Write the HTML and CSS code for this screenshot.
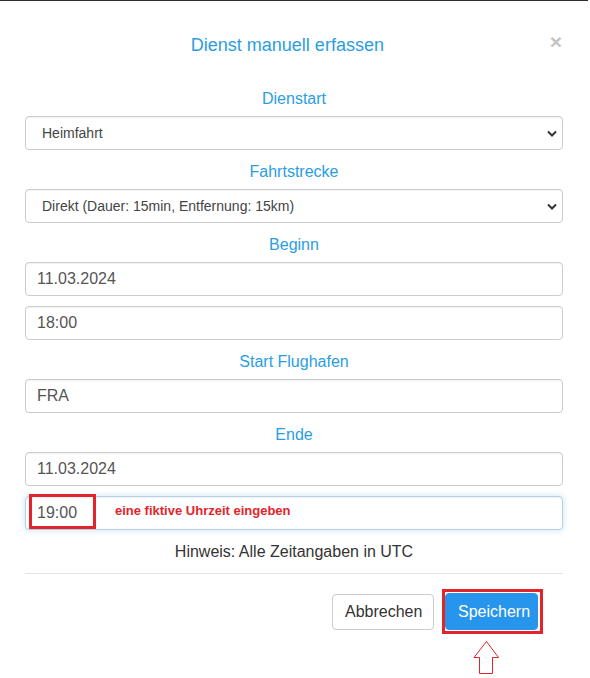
FILE: index.html
```html
<!DOCTYPE html>
<html lang="de">
<head>
<meta charset="utf-8">
<title>Dienst manuell erfassen</title>
<link rel="stylesheet" href="styles.css">
</head>
<body>
<div class="topline"></div>
<div class="modal">
  <div class="modal-header">
    <h4 class="modal-title">Dienst manuell erfassen</h4>
    <button class="close" type="button">×</button>
  </div>
  <form class="modal-body">
    <div class="group">
      <label class="lbl">Dienstart</label>
      <div class="select-wrap">
        <select class="control select"><option>Heimfahrt</option></select>
        <svg class="chev" width="10" height="7" viewBox="0 0 10 7"><polyline points="1,1.5 5,5.5 9,1.5" fill="none" stroke="#333" stroke-width="2"/></svg>
      </div>
    </div>
    <div class="group">
      <label class="lbl">Fahrtstrecke</label>
      <div class="select-wrap">
        <select class="control select"><option>Direkt (Dauer: 15min, Entfernung: 15km)</option></select>
        <svg class="chev" width="10" height="7" viewBox="0 0 10 7"><polyline points="1,1.5 5,5.5 9,1.5" fill="none" stroke="#333" stroke-width="2"/></svg>
      </div>
    </div>
    <div class="group">
      <label class="lbl">Beginn</label>
      <input class="control" type="text" value="11.03.2024">
      <input class="control next" type="text" value="18:00">
    </div>
    <div class="group">
      <label class="lbl">Start Flughafen</label>
      <input class="control" type="text" value="FRA">
    </div>
    <div class="group">
      <label class="lbl">Ende</label>
      <input class="control" type="text" value="11.03.2024">
      <div class="annot-wrap next">
        <input class="control focus" type="text" value="19:00">
        <div class="redbox time-box"></div>
        <div class="annot-text">eine fiktive Uhrzeit eingeben</div>
      </div>
    </div>
    <p class="hint">Hinweis: Alle Zeitangaben in UTC</p>
  </form>
  <div class="modal-footer">
    <button class="btn btn-default" type="button">Abbrechen</button>
    <div class="annot-wrap">
      <button class="btn btn-primary" type="button">Speichern</button>
      <div class="redbox save-box"></div>
      <svg class="arrow" width="27" height="34" viewBox="0 0 27 34"><polygon points="13.5,0.5 1,16.5 6.5,16.5 6.5,32.5 19.5,32.5 19.5,16.5 25.5,16.5" fill="#fff" stroke="#e3242b" stroke-width="1"/></svg>
    </div>
  </div>
</div>
</body>
</html>
```

FILE: styles.css
```css
html {
  overflow: hidden;
  height: 100%;
}
html, body {
  margin: 0;
  padding: 0;
  background: #fff;
}
body {
  min-height: 100%;
  font-family: "Liberation Sans", Arial, sans-serif;
  color: #333;
}
.topline {
  height: 1px;
  background: #2b2e30;
  margin-right: 2px;
}
.modal {
  padding: 0 27px 0 25px;
}
.modal-header {
  display: flex;
  align-items: flex-start;
  padding-top: 34px;
}
.modal-title {
  flex: 1;
  margin: 0;
  font-size: 18px;
  line-height: 20px;
  font-weight: normal;
  color: #2b9de3;
  text-align: center;
}
.close {
  border: 0;
  background: none;
  padding: 0;
  margin: -3px 1px 0 0;
  font-family: "Liberation Sans", Arial, sans-serif;
  font-size: 21px;
  font-weight: bold;
  line-height: 20px;
  color: #c4c4c4;
}
.modal-body {
  display: block;
  margin: 0;
  padding-top: 32px;
}
.group {
  margin-bottom: 10px;
}
.lbl {
  display: block;
  text-align: center;
  font-size: 16px;
  line-height: 23px;
  color: #2b9de3;
  margin-bottom: 6px;
}
.control {
  display: block;
  box-sizing: border-box;
  width: 100%;
  height: 34px;
  margin: 0;
  padding: 0 11px;
  border: 1px solid #ccc;
  border-radius: 4px;
  background: #fff;
  font-family: "Liberation Sans", Arial, sans-serif;
  font-size: 16px;
  color: #555;
  box-shadow: inset 0 1px 1px rgba(0,0,0,0.05);
  outline: none;
}
.next {
  margin-top: 10px;
}
.select-wrap {
  position: relative;
}
.select {
  -webkit-appearance: none;
  appearance: none;
  padding-left: 16px;
  font-size: 14px;
  color: #444;
}
.chev {
  position: absolute;
  right: 6px;
  top: 14px;
}
.focus {
  border-color: #b6cfe4;
  box-shadow: inset 0 1px 1px rgba(0,0,0,0.06), 0 0 6px rgba(102,175,233,0.35);
}
.annot-wrap {
  position: relative;
}
.redbox {
  position: absolute;
  border: 3px solid #e3242b;
  box-sizing: border-box;
}
.time-box {
  left: 4px;
  top: -2px;
  width: 67px;
  height: 35px;
}
.annot-text {
  position: absolute;
  left: 90px;
  top: 7px;
  font-size: 13px;
  line-height: 16px;
  font-weight: bold;
  color: #e3242b;
}
.hint {
  margin: 11px 0 0;
  text-align: center;
  font-size: 16px;
  line-height: 22px;
  color: #333;
  padding-bottom: 10px;
  border-bottom: 1px solid #e5e5e5;
}
.modal-footer {
  display: flex;
  justify-content: flex-end;
  align-items: flex-start;
  gap: 11px;
  padding: 20px 25px 46px 0;
}
.btn {
  box-sizing: border-box;
  height: 36px;
  padding: 0 12px;
  margin: 0;
  border-radius: 4px;
  font-family: "Liberation Sans", Arial, sans-serif;
  font-size: 16px;
  line-height: 34px;
  cursor: pointer;
}
.btn-default {
  background: #fff;
  color: #333;
  border: 1px solid #ccc;
  width: 102px;
}
.btn-primary {
  display: block;
  background: #2795eb;
  color: #fff;
  border: 1px solid #2795eb;
  width: 93px;
  margin-top: -1px;
  height: 37px;
}
.save-box {
  left: -3px;
  right: -5px;
  top: -5px;
  bottom: -4px;
}
.arrow {
  position: absolute;
  left: 28px;
  top: 47px;
}
```
